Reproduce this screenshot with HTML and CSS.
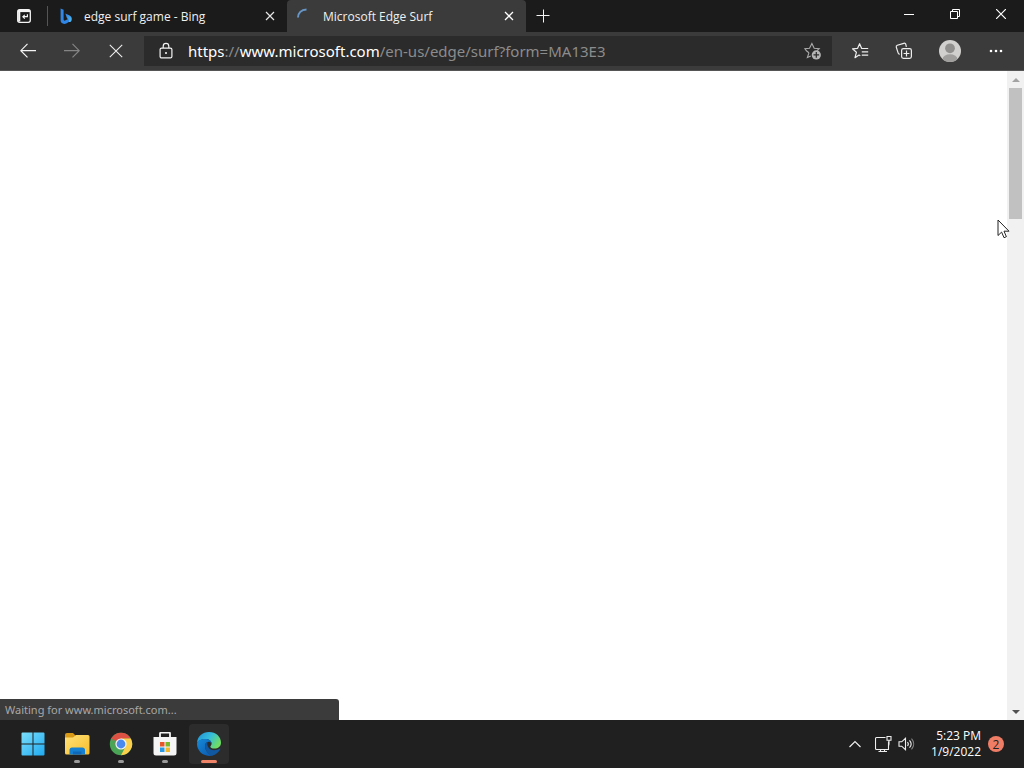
FILE: index.html
```html
<!DOCTYPE html>
<html lang="en">
<head>
<meta charset="utf-8">
<meta name="viewport" content="width=device-width, initial-scale=1">
<title>Microsoft Edge Surf</title>
<link rel="stylesheet" href="styles.css">
</head>
<body>
<div class="desktop">
  <header class="titlebar">
    <button class="tab-actions" type="button" aria-label="Tab actions menu">
      <svg width="16" height="16" viewBox="0 0 16 16" fill="none" stroke="#f4f4f4" stroke-width="1.3"><rect x="1.7" y="1.7" width="12.6" height="12.6" rx="2"/><path d="M2 3h12" stroke-width="2.2"/><path d="M3.2 4v9.5" stroke-width="2.2"/><path d="M11.4 6.2v2.5H7M8.8 6.8 6.9 8.7l1.9 1.9" stroke-width="1.2"/></svg>
    </button>
    <nav class="tabs" aria-label="Tabs">
      <div class="tab">
        <svg class="favicon" width="16" height="16" viewBox="0 0 16 16"><defs><linearGradient id="bing" x1="0" y1="0" x2="1" y2="1"><stop offset="0" stop-color="#2f78dc"/><stop offset="1" stop-color="#4fc3f5"/></linearGradient></defs><path d="M2.600.5 5.600 1.700v9.600c0 1 .6 1.600 1.500 1.300l3.900-2 2.400 1.400c-.4.700-1 1.200-1.700 1.600l-3.500 1.900c-1.300.7-2.600.6-3.900-.2-1.100-.7-1.700-1.700-1.700-2.900z" fill="#2f86e6"/><path d="m7.300 5.400 3.900 1.900c2.300 1.100 3.200 3.300 2.200 5.500-.5 1-1.600 1.600-2.600 1.100.6-1.300.1-2.300-1-3L8.900 10z" fill="url(#bing)"/></svg>
        <a class="tab-title" href="#bing">edge surf game - Bing</a>
        <button class="tab-close" type="button" aria-label="Close tab"><svg width="10" height="10" viewBox="0 0 10 10" stroke="#e6e6e6" stroke-width="1.2"><path d="m1 1 8 8M9 1 1 9"/></svg></button>
      </div>
      <div class="tab tab-active">
        <svg class="favicon" width="16" height="16" viewBox="0 0 16 16" fill="none" stroke="#6796c7" stroke-width="2"><path d="M1 9.500C1 5.200 4.200 1.500 9.500 1.500"/></svg>
        <a class="tab-title" href="#surf" aria-current="page">Microsoft Edge Surf</a>
        <button class="tab-close" type="button" aria-label="Close tab"><svg width="10" height="10" viewBox="0 0 10 10" stroke="#fff" stroke-width="1.3"><path d="m1 1 8 8M9 1 1 9"/></svg></button>
      </div>
    </nav>
    <button class="new-tab" type="button" aria-label="New tab"><svg width="14" height="14" viewBox="0 0 14 14" stroke="#f4f4f4"><path d="M.5 6.5h13M7.5.5v13"/></svg></button>
    <div class="window-controls">
      <button type="button" aria-label="Minimize"><svg width="10" height="10" viewBox="0 0 10 10" stroke="#fff"><path d="M0 5.5h10"/></svg></button>
      <button type="button" aria-label="Restore"><svg width="10" height="10" viewBox="0 0 10 10" fill="none" stroke="#fff"><path d="M.5 2.5h7v7h-7zM2.5 2.5v-2h7v7h-2"/></svg></button>
      <button type="button" aria-label="Close"><svg width="10" height="10" viewBox="0 0 10 10" stroke="#fff" stroke-width="1.2"><path d="m0 0 10 10M10 0 0 10"/></svg></button>
    </div>
  </header>

  <div class="toolbar">
    <div class="tools">
      <button type="button" aria-label="Back"><svg width="16" height="16" viewBox="0 0 16 16" fill="none" stroke="#f4f4f4" stroke-width="1.2"><path d="M16 7.7H.8M7.5.9.8 7.7l6.7 6.7"/></svg></button>
      <button type="button" aria-label="Forward" disabled><svg width="16" height="16" viewBox="0 0 16 16" fill="none" stroke="#858585" stroke-width="1.2"><path d="M0 7.7h15.2M8.5.9l6.7 6.8-6.7 6.7"/></svg></button>
      <button type="button" aria-label="Stop loading"><svg width="14" height="14" viewBox="0 0 14 14" stroke="#eee" stroke-width="1.1"><path d="m.8.8 12.4 12.4M13.2.8.8 13.2"/></svg></button>
    </div>
    <div class="address">
      <button class="site-info" type="button" aria-label="View site information"><svg width="16" height="18" viewBox="0 0 16 18" fill="none" stroke="#f4f4f4" stroke-width="1.2"><rect x="2.1" y="6.1" width="11.8" height="9.8" rx="1.5"/><path d="M5.2 6V4.2a2.8 2.8 0 0 1 5.6 0V6"/><circle cx="8" cy="11" r="1" fill="#fff" stroke="none"/></svg></button>
      <div class="url" role="textbox" aria-label="Address and search bar" contenteditable="true" spellcheck="false"><span class="url-strong">https</span>://<span class="url-strong">www.microsoft.com</span>/en-us/edge/surf?form=MA13E3</div>
      <button class="add-favorite" type="button" aria-label="Add this page to favorites"><svg width="18" height="18" viewBox="0 0 18 18" fill="none" stroke="#aaa" stroke-width="1.1"><path d="m5.9 10.8-2.5-2L1.9 6.7l4.6-.5L8.9 1.4l2.3 4.8 5 .5-2.1 2M6 10.7l-1.6 4.8 3.4-1.6"/><circle cx="13.3" cy="12.9" r="4.6" fill="#b4b4b4" stroke="none"/><path d="M13.3 10.1v5.6M10.5 12.9h5.6" stroke="#2c2c2c" stroke-width="1.2"/></svg></button>
    </div>
    <div class="tools">
      <button type="button" aria-label="Favorites"><svg width="18" height="18" viewBox="0 0 18 18" fill="none" stroke="#eee" stroke-width="1.2" stroke-linejoin="round"><path d="M10.9 6.5h-.2L8.6 1.7 6.6 6.3 1.5 6.8l3.9 3.5-1.4 5.4 4-2.7 1.3.8M10.8 6.5h6.4M10.8 9.8h6.4M10.8 13.1h6.4"/></svg></button>
      <button type="button" aria-label="Collections"><svg width="18" height="18" viewBox="0 0 18 18" fill="none" stroke="#eee" stroke-width="1.2"><rect x="6.6" y="6.6" width="9.8" height="9.8" rx="1.8"/><path d="M11.5 8.6v5.8M8.6 11.5h5.8M4.8 12.2c-1 .1-1.5-.4-1.7-1.3L1.3 5.2c-.3-1 .1-1.6 1-2l6.5-1.9c1-.3 1.7.1 2 1l.6 2.5"/></svg></button>
      <button class="profile" type="button" aria-label="Profile"><svg width="22" height="22" viewBox="0 0 23 23"><defs><clipPath id="face"><circle cx="11.5" cy="11.5" r="11.5"/></clipPath></defs><g clip-path="url(#face)"><path fill="#d2d0ce" d="M0 0h23v23H0z"/><circle cx="11.5" cy="8.7" r="5.1" fill="#918f8d"/><ellipse cx="11.5" cy="20" rx="7.8" ry="5" fill="#a19f9d"/></g></svg></button>
      <button type="button" aria-label="Settings and more"><svg width="14" height="4" viewBox="0 0 14 4" fill="#fff"><circle cx="2" cy="2" r="1.3"/><circle cx="7" cy="2" r="1.3"/><circle cx="12" cy="2" r="1.3"/></svg></button>
    </div>
  </div>

  <div class="viewport">
    <main class="page" aria-busy="true"></main>
    <div class="scrollbar">
      <button type="button" aria-label="Scroll up"><svg width="8" height="4" viewBox="0 0 8 4"><path d="M4 0 8 4H0z" fill="#a3a3a3"/></svg></button>
      <div class="track"><div class="thumb"></div></div>
      <button type="button" aria-label="Scroll down"><svg width="8" height="4" viewBox="0 0 8 4"><path d="M0 0h8L4 4z" fill="#505050"/></svg></button>
    </div>
    <div class="status" role="status">Waiting for www.microsoft.com...</div>
    <svg class="cursor" width="13" height="20" viewBox="0 0 13 20" aria-hidden="true"><path d="M1 1v15.5l3.6-3.4 2.4 5.6 2.4-1-2.4-5.5h5z" fill="#fff" stroke="#222"/></svg>
  </div>

  <footer class="taskbar">
    <nav class="apps" aria-label="Taskbar">
      <button class="app" type="button" aria-label="Start"><svg width="24" height="24" viewBox="0 0 24 24"><defs><linearGradient id="win" gradientUnits="userSpaceOnUse" x1="0" y1="0" x2="24" y2="24"><stop offset="0" stop-color="#7de0fb"/><stop offset="1" stop-color="#1da9f2"/></linearGradient></defs><path d="M.5 1.5a1 1 0 0 1 1-1h10v11H.5zM12.5.5h10a1 1 0 0 1 1 1v10h-11zM.5 12.5h11v11h-10a1 1 0 0 1-1-1zM12.5 12.5h11v10a1 1 0 0 1-1 1h-10z" fill="url(#win)"/></svg></button>
      <button class="app running" type="button" aria-label="File Explorer"><svg width="26" height="24" viewBox="0 0 26 24"><defs><linearGradient id="folder" x1="0" y1="0" x2="1" y2="1"><stop offset="0" stop-color="#ffe27a"/><stop offset="1" stop-color="#f7bd2a"/></linearGradient></defs><path d="M1 3a2 2 0 0 1 2-2h6l3 3-3 3H1z" fill="#d99a17"/><path d="M1 5.5h8L12 3h12a1.5 1.5 0 0 1 1.5 1.5V21a1.5 1.5 0 0 1-1.5 1.5H2.5A1.5 1.5 0 0 1 1 21z" fill="url(#folder)"/><path d="M5.5 22.5v-5A2.5 2.5 0 0 1 8 15.5h10.500a2.500 2.500 0 0 1 2.500 2v5z" fill="#1580d2"/><path d="M9 19.5h8.5v3H9z" fill="#0f69b8"/></svg></button>
      <button class="app running" type="button" aria-label="Google Chrome"><svg width="24" height="24" viewBox="0 0 24 24"><circle cx="12" cy="12" r="11.2" fill="#4aa557"/><path d="M2.3 6.4a11.2 11.2 0 0 1 19.4 0L12 7l-4.7 7.7z" fill="#dd5144"/><path d="M21.7 6.4A11.2 11.2 0 0 1 12 23.2l4.6-8.7L12 6.4z" fill="#fcd04b"/><path d="m2.3 6.4 5 8.2L12 12z" fill="#4aa557"/><circle cx="12" cy="12" r="5.6" fill="#f4f4f4"/><circle cx="12" cy="12" r="4.4" fill="#4a89ee"/></svg></button>
      <button class="app running" type="button" aria-label="Microsoft Store"><svg width="24" height="24" viewBox="0 0 24 24"><path d="M7 6V1.5a1 1 0 0 1 1-1h8a1 1 0 0 1 1 1V6" fill="none" stroke="#f3f3f3" stroke-width="1.8"/><path d="M.5 5h23v16a2.500 2.500 0 0 1-2.500 2.500H3A2.500 2.500 0 0 1 .5 21z" fill="#f5f5f5"/><path d="M7 10h4.5v4.500H7z" fill="#e5562b"/><path d="M12.5 10H17v4.500h-4.500z" fill="#79b829"/><path d="M7 15.5h4.500V20H7z" fill="#2b99e3"/><path d="M12.5 15.5H17V20h-4.500z" fill="#f4b82d"/></svg></button>
      <button class="app running current" type="button" aria-label="Microsoft Edge"><svg width="26" height="26" viewBox="0 0 26 26"><defs><linearGradient id="edge-top" x1="0" y1="0" x2="1" y2=".5"><stop offset="0" stop-color="#218fd5"/><stop offset=".55" stop-color="#35bddb"/><stop offset="1" stop-color="#6edc65"/></linearGradient><linearGradient id="edge-low" x1="0" y1="0" x2="1" y2="1"><stop offset="0" stop-color="#168bd8"/><stop offset="1" stop-color="#0b55ac"/></linearGradient></defs><path d="M1 12C1.500 5 6.500 1 13 1c7 0 12 4.800 12 10.500 0 4.200-3 6-6.500 6-2.700 0-4.200-1-4.200-1.800 0-.8 1.300-1.200 1.300-3.200 0-2.700-2.600-4.500-6.200-4.500C5.500 8 2 10 1 12z" fill="url(#edge-top)"/><path d="M1 13c0-3 3.500-5 8.400-5 3.600 0 6.200 1.800 6.200 4.500-.6-1.300-1.700-1.800-2.900-1.800-2.400 0-3.700 2.200-3.700 4.300 0 4.200 3.800 9.300 8.300 9.300C8 27 1 20 1 13z" fill="url(#edge-low)"/><path d="M9 15c0-2 1.200-3.500 2.500-4-1 4 1.500 8.200 6.500 8.200 2.500 0 4.500-1 5.500-1.500.7-.4 1 .1.600.8-1.500 2.900-4.500 5.300-7.600 6C12.500 24.500 9 19.200 9 15z" fill="#1158a3"/></svg></button>
    </nav>
    <div class="tray">
      <button class="chevron" type="button" aria-label="Show hidden icons"><svg width="12" height="8" viewBox="0 0 12 8" fill="none" stroke="#eee" stroke-width="1.2"><path d="M.5 7 6 1.5 11.5 7"/></svg></button>
      <button class="quick" type="button" aria-label="Network and volume">
        <svg width="17" height="18" viewBox="0 0 17 18" fill="none" stroke="#eee" stroke-width="1.1"><path d="M10.5 2.5h-9a1 1 0 0 0-1 1v10a1 1 0 0 0 1 1h12V6.500M5.500 14.500V16M9.500 14.500V16M3.500 16.500h8.500M12 1.500h4v3.800h-4zM14 5.300v3.500c0 1-.5 1.500-.5 2.500"/></svg>
        <svg width="17" height="16" viewBox="0 0 17 16" fill="none" stroke="#eee" stroke-width="1.1"><path d="M1 5.800h2.700L7.500 2.300v11.400l-3.800-3.500H1zM9.500 6c1 1.200 1 2.800 0 4M11.500 4.300c2 2.200 2 5.200 0 7.400"/><path d="M13.500 2.700c2.900 3.200 2.900 7.400 0 10.600" stroke="#858585"/></svg>
      </button>
      <button class="clock" type="button"><time datetime="2022-01-09T17:23">5:23 PM<br>1/9/2022</time></button>
      <button class="badge" type="button" aria-label="2 new notifications">2</button>
    </div>
  </footer>
</div>
</body>
</html>
```
FILE: styles.css
```css
* {
  box-sizing: border-box;
}

body {
  margin: 0;
  font-family: "Open Sans", "Noto Sans", sans-serif;
  font-size: 12px;
}

button {
  display: flex;
  align-items: center;
  justify-content: center;
  margin: 0;
  padding: 0;
  border: 0;
  background: none;
  color: inherit;
  font: inherit;
}

.desktop {
  display: flex;
  flex-direction: column;
  height: 100vh;
  overflow: hidden;
}

.titlebar {
  display: flex;
  height: 32px;
  background: #1b1b1b;
  color: #f0f0f0;
}

.tab-actions {
  width: 48px;
  background: linear-gradient(#555, #555) right center / 1px 20px no-repeat;
}

.tabs {
  display: flex;
  flex: 0 1 478px;
  min-width: 0;
}

.tab {
  display: flex;
  flex: 1;
  align-items: center;
  min-width: 0;
  padding: 0 10px;
}

.tab-active {
  border-radius: 4px 4px 0 0;
  background: #3b3b3b;
}

.favicon {
  flex: none;
  margin-right: 10px;
}

.tab-title {
  flex: 1;
  overflow: hidden;
  color: inherit;
  text-decoration: none;
  white-space: nowrap;
}

.tab-close {
  width: 14px;
  height: 24px;
}

.new-tab {
  width: 34px;
}

.window-controls {
  display: flex;
  height: 28px;
  margin-left: auto;
}

.window-controls button {
  width: 46px;
}

.toolbar {
  display: flex;
  align-items: center;
  gap: 6px;
  height: 39px;
  padding: 0 6px;
  border-bottom: 1px solid #555;
  background: #3b3b3b;
}

.tools {
  display: flex;
}

.tools button {
  width: 44px;
  height: 30px;
}

.tools .profile {
  width: 48px;
}

.address {
  display: flex;
  flex: 1;
  align-items: center;
  min-width: 0;
  height: 30px;
  background: #2b2b2b;
  color: #8c8c8c;
  font-family: "Noto Sans", "Open Sans", sans-serif;
  font-size: 15px;
}

.site-info {
  width: 44px;
  height: 30px;
}

.url {
  flex: 1;
  overflow: hidden;
  outline: 0;
  white-space: nowrap;
}

.url-strong {
  color: #fff;
}

.add-favorite {
  width: 40px;
  height: 30px;
}

.viewport {
  position: relative;
  display: flex;
  flex: 1;
  min-height: 0;
  background: #fff;
}

.page {
  flex: 1;
}

.scrollbar {
  display: flex;
  flex-direction: column;
  width: 17px;
  background: #f1f1f1;
}

.scrollbar button {
  height: 17px;
}

.track {
  flex: 1;
  padding: 0 2px;
}

.thumb {
  height: 21.3%;
  background: #c1c1c1;
}

.status {
  position: absolute;
  bottom: 0;
  left: 0;
  width: 339px;
  height: 21px;
  padding: 0 5px;
  border-top-right-radius: 3px;
  background: #3b3b3b;
  color: #a8a8a8;
  font-family: "Noto Sans", "Open Sans", sans-serif;
  font-size: 11px;
  line-height: 22px;
}

.cursor {
  position: absolute;
  top: 148px;
  right: 14px;
}

.taskbar {
  display: flex;
  align-items: center;
  justify-content: space-between;
  height: 48px;
  padding: 0 20px 0 13px;
  background: #202020;
  color: #fff;
}

.apps {
  display: flex;
  gap: 4px;
}

.app {
  position: relative;
  width: 40px;
  height: 40px;
  border-radius: 4px;
}

.running::after {
  position: absolute;
  bottom: 1px;
  width: 6px;
  height: 3px;
  border-radius: 2px;
  background: #9a9a9a;
  content: "";
}

.current {
  background: #2c2c2c;
}

.current::after {
  width: 16px;
  background: #f08468;
}

.tray {
  display: flex;
  align-items: center;
}

.chevron {
  width: 32px;
  height: 40px;
}

.quick {
  gap: 6px;
  width: 48px;
  height: 40px;
}

.clock {
  justify-content: flex-end;
  width: 62px;
  height: 40px;
  line-height: 16px;
  text-align: right;
}

.badge {
  width: 16px;
  height: 16px;
  margin-left: 7px;
  border-radius: 50%;
  background: #ef7d66;
  color: #222;
}
```
